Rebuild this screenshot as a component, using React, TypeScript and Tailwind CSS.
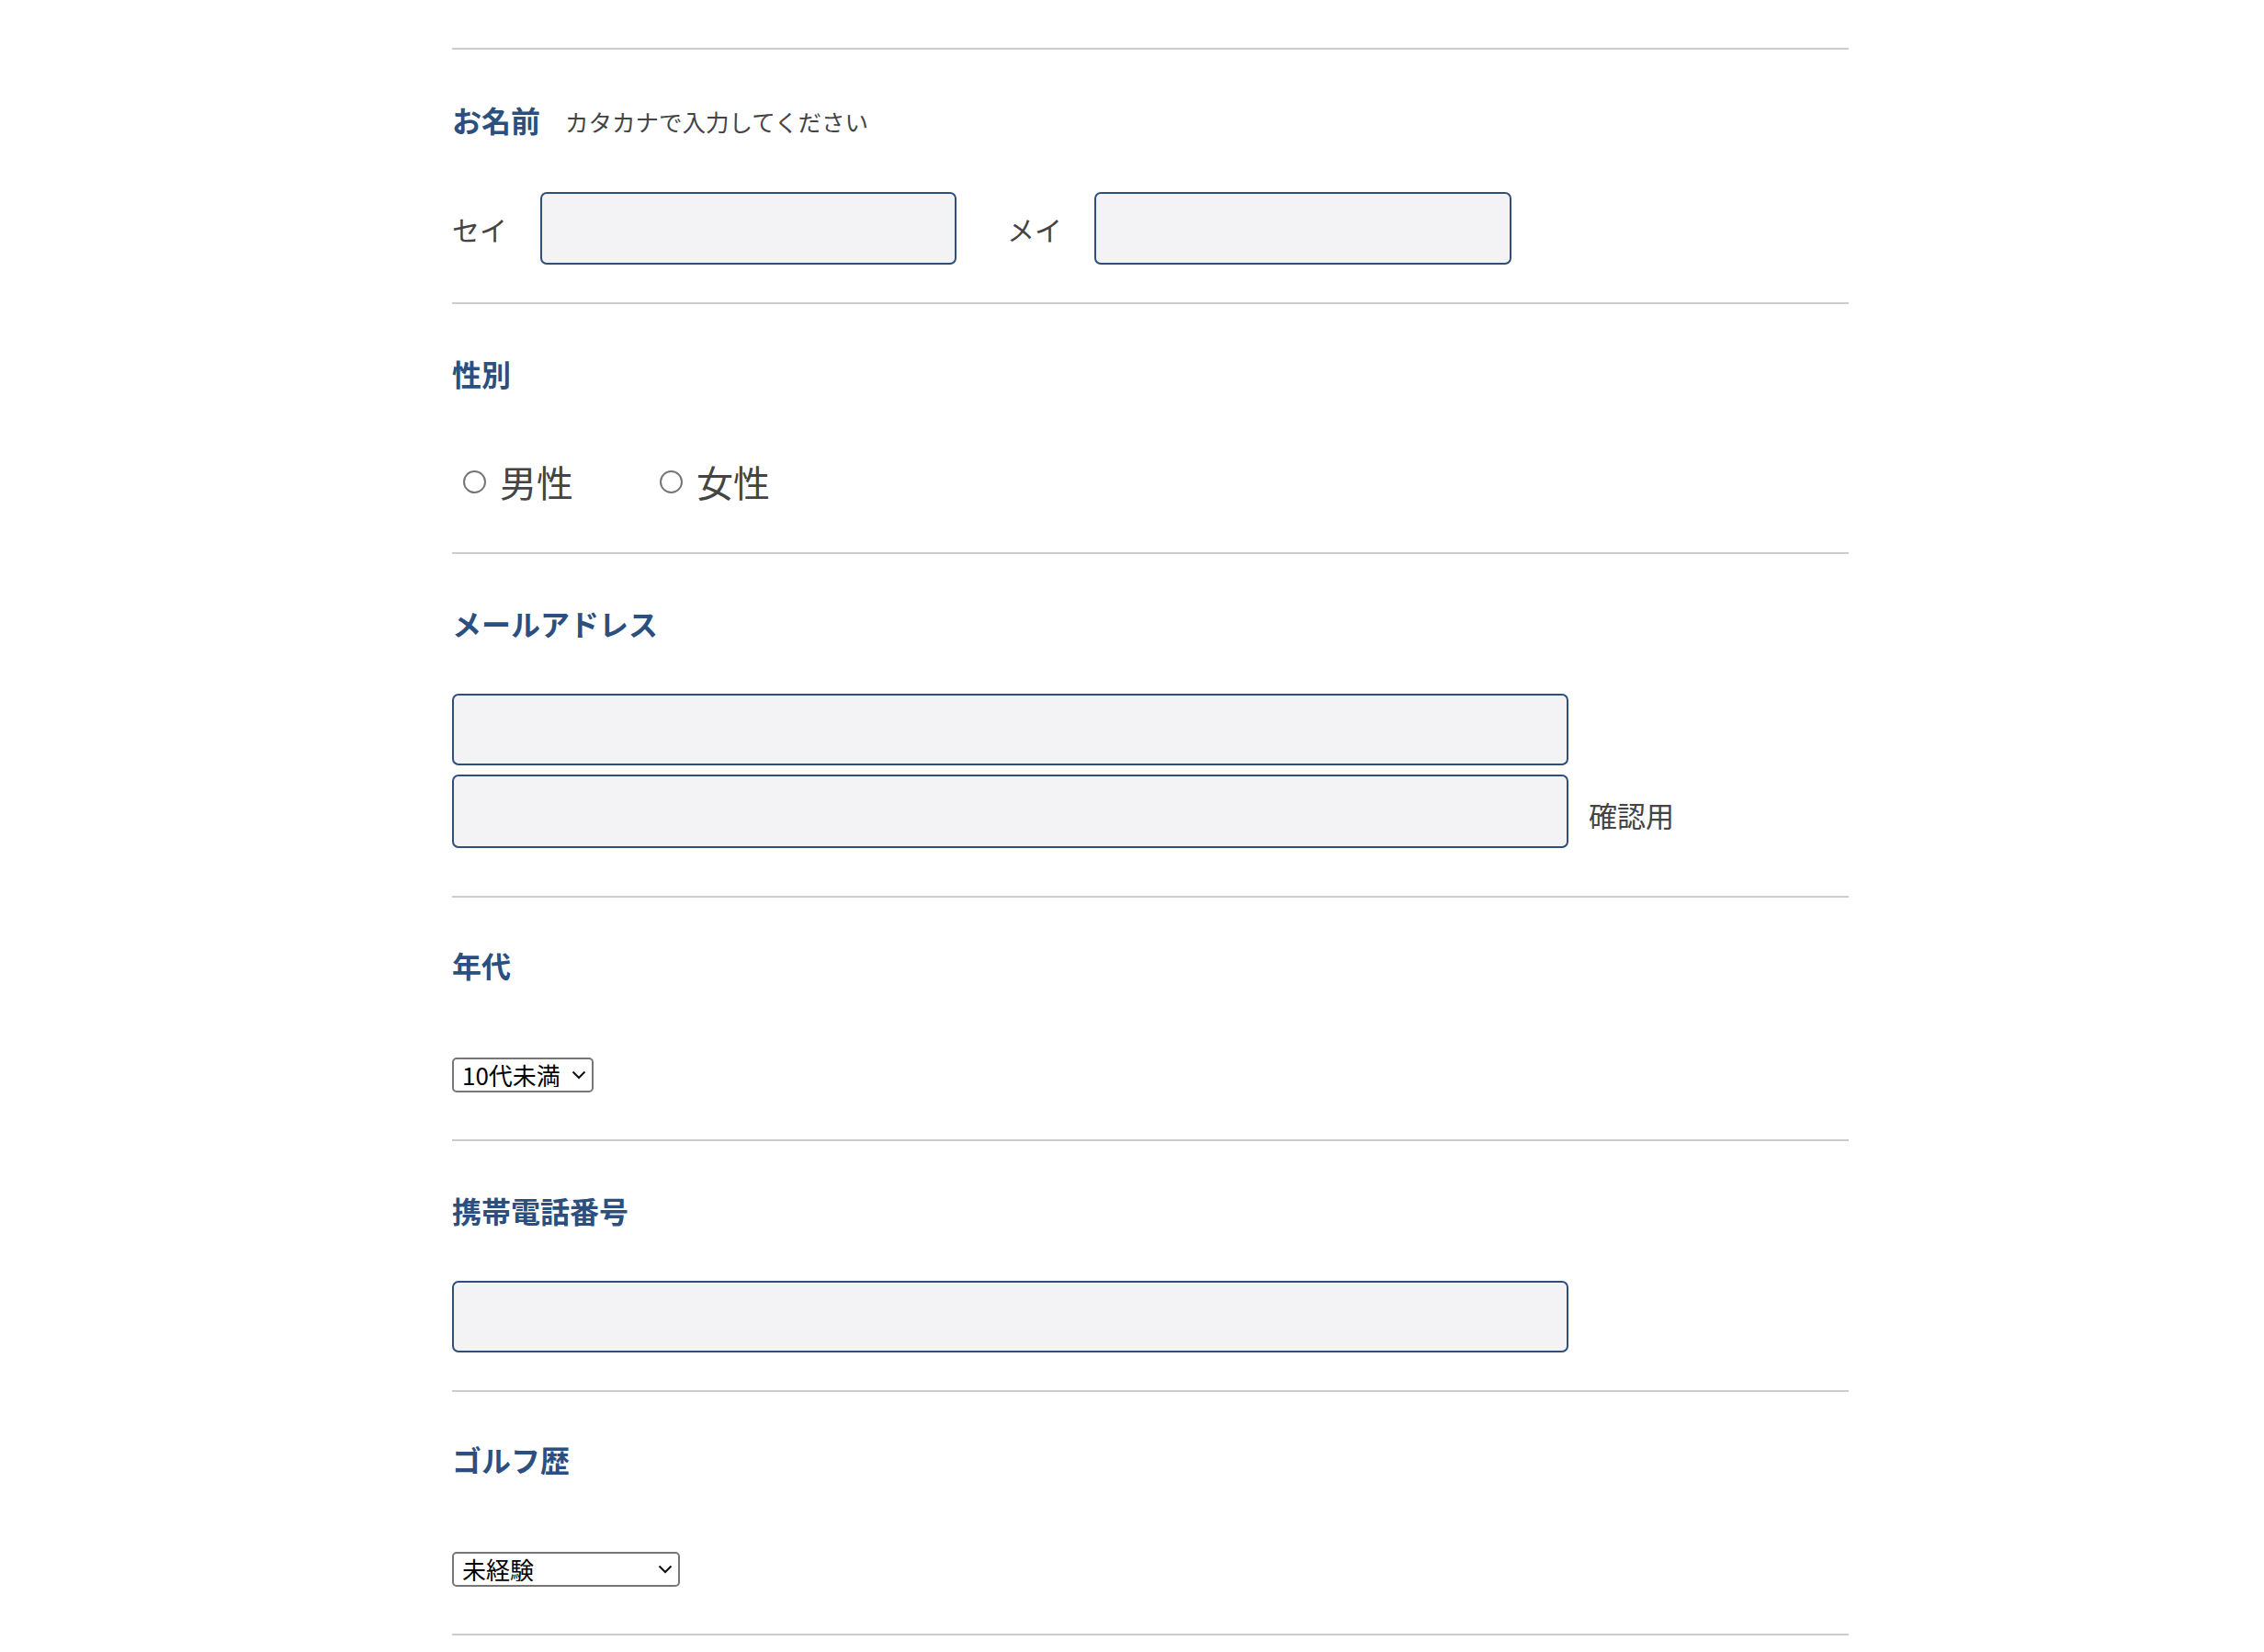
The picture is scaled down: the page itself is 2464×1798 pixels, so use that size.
import React from "react";

const labelCls =
  "h-[40px] leading-[40px] text-[32px] font-bold text-[#2b4f7e] whitespace-nowrap";
const inputCls =
  "h-[78px] bg-[#f3f3f5] border-2 border-[#2c4f7c] rounded-[7px] outline-none";

function Chevron() {
  return (
    <svg
      className="pointer-events-none absolute right-[8px] top-1/2 -translate-y-1/2"
      width="16"
      height="10"
      viewBox="0 0 16 10"
      fill="none"
    >
      <path d="M1.5 1.5 L8 8 L14.5 1.5" stroke="#111" strokeWidth="2" />
    </svg>
  );
}

function Select({ w, value }: { w: string; value: string }) {
  return (
    <div className={`relative ${w} h-[38px]`}>
      <select
        defaultValue={value}
        className="appearance-none w-full h-full bg-white border-2 border-[#767676] rounded-[5px] pl-[9px] text-[26px] leading-none text-black outline-none"
      >
        <option>{value}</option>
      </select>
      <Chevron />
    </div>
  );
}

function Radio({ label, className }: { label: string; className?: string }) {
  return (
    <label className={`flex items-center ${className ?? ""}`}>
      <span className="ml-[12px] w-[25px] h-[25px] rounded-full border-2 border-[#767676] bg-white" />
      <span className="ml-[15px] text-[40px] leading-none text-[#444]">{label}</span>
    </label>
  );
}

export default function App() {
  return (
    <div
      className="min-h-screen w-full bg-white"
      style={{ fontFamily: '"Noto Sans CJK JP", "Noto Sans", sans-serif' }}
    >
      <div className="ml-[492px] w-[1520px] pt-[52px]">
        <div className="border-t-2 border-[#cccccc]" />

        {/* お名前 */}
        <section className="pt-[56px] pb-[41px] border-b-2 border-[#cccccc]">
          <div className="flex items-center h-[40px]">
            <span className={labelCls}>お名前</span>
            <span className="ml-[27px] text-[25.5px] text-[#444] leading-none mt-[4px]">
              カタカナで入力してください
            </span>
          </div>
          <div className="mt-[59px] flex items-center h-[79px]">
            <span className="text-[30px] text-[#444] leading-none">セイ</span>
            <input className={`${inputCls} ml-[36px] w-[453px] h-[79px]`} />
            <span className="ml-[55px] text-[30px] text-[#444] leading-none">メイ</span>
            <input className={`${inputCls} ml-[35px] w-[454px] h-[79px]`} />
          </div>
        </section>

        {/* 性別 */}
        <section className="pt-[55px] pb-[52px] border-b-2 border-[#cccccc]">
          <div className={labelCls}>性別</div>
          <div className="mt-[73px] flex items-center h-[50px]">
            <Radio label="男性" />
            <Radio label="女性" className="ml-[82px]" />
          </div>
        </section>

        {/* メールアドレス */}
        <section className="pt-[55px] pb-[52px] border-b-2 border-[#cccccc]">
          <div className={labelCls}>メールアドレス</div>
          <div className="mt-[57px] flex flex-col gap-[10px]">
            <input className={`${inputCls} w-[1215px]`} />
            <div className="flex items-center">
              <input className={`${inputCls} w-[1215px] h-[80px]`} />
              <span className="ml-[22px] text-[31px] text-[#444] leading-none mt-[6px]">確認用</span>
            </div>
          </div>
        </section>

        {/* 年代 */}
        <section className="pt-[53px] pb-[51px] border-b-2 border-[#cccccc]">
          <div className={labelCls}>年代</div>
          <div className="mt-[81px]">
            <Select w="w-[154px]" value="10代未満" />
          </div>
        </section>

        {/* 携帯電話番号 */}
        <section className="pt-[55px] pb-[41px] border-b-2 border-[#cccccc]">
          <div className={labelCls}>携帯電話番号</div>
          <div className="mt-[57px]">
            <input className={`${inputCls} w-[1215px]`} />
          </div>
        </section>

        {/* ゴルフ歴 */}
        <section className="pt-[53px] pb-[51px] border-b-2 border-[#cccccc]">
          <div className={labelCls}>ゴルフ歴</div>
          <div className="mt-[81px]">
            <Select w="w-[248px]" value="未経験" />
          </div>
        </section>
      </div>
    </div>
  );
}
